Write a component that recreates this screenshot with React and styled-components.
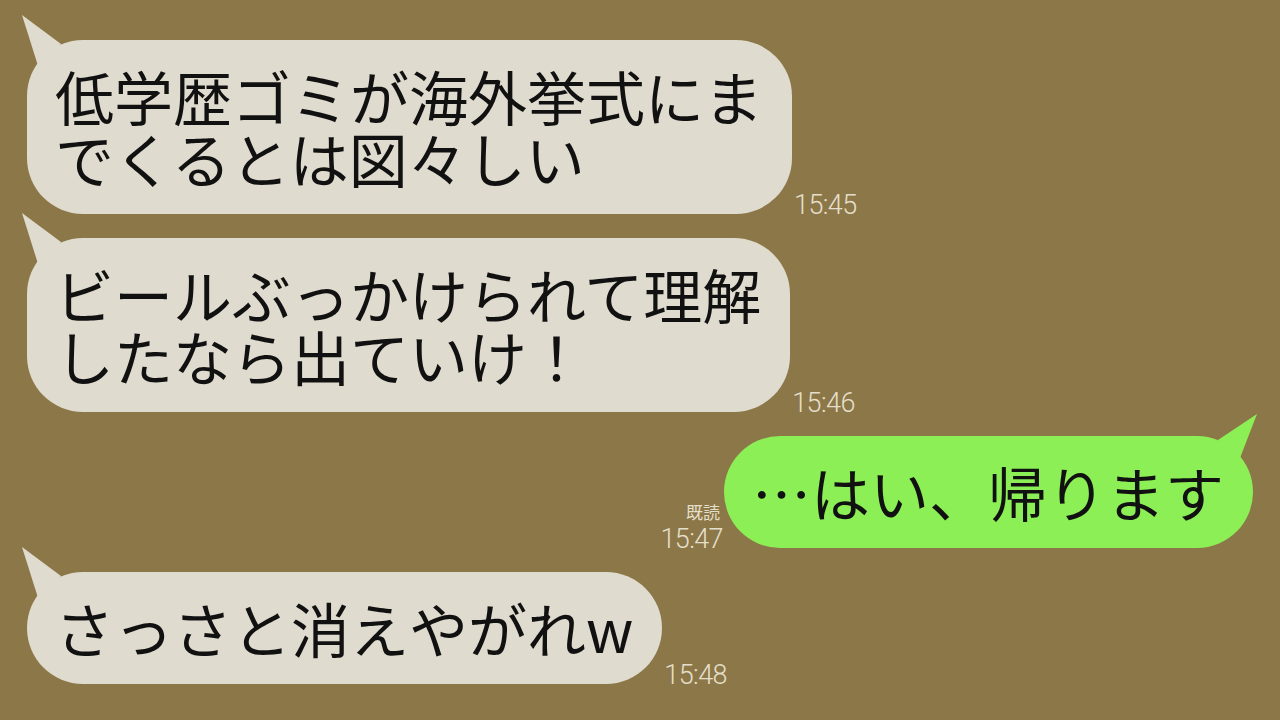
import React from 'react';
import styled, { createGlobalStyle } from 'styled-components';

const messages = [
  { id: 1, side: 'left', text: '低学歴ゴミが海外挙式にま\nでくるとは図々しい', time: '15:45' },
  { id: 2, side: 'left', text: 'ビールぶっかけられて理解\nしたなら出ていけ！', time: '15:46' },
  { id: 3, side: 'right', text: '…はい、帰ります', time: '15:47', read: true },
  { id: 4, side: 'left', text: 'さっさと消えやがれw', time: '15:48' },
];

const Tail = ({ side }) =>
  side === 'left' ? (
    <TailSvg $side={side} width="44" height="56" viewBox="0 0 44 56">
      <polygon points="1,0 40,29 18,54" />
    </TailSvg>
  ) : (
    <TailSvg $side={side} width="44" height="56" viewBox="0 0 44 56">
      <polygon points="41,0 2,26 24,44" />
    </TailSvg>
  );

const App = () => {
  return (
    <>
      <GlobalStyle />
      <Chat>
        {messages.map((m) => (
          <Row key={m.id} $side={m.side}>
            {m.side === 'right' && (
              <Meta $side={m.side}>
                {m.read && <Read>既読</Read>}
                <Time>{m.time}</Time>
              </Meta>
            )}
            <Bubble $side={m.side}>
              <Tail side={m.side} />
              <BubbleText>{m.text}</BubbleText>
            </Bubble>
            {m.side === 'left' && (
              <Meta $side={m.side}>
                <Time>{m.time}</Time>
              </Meta>
            )}
          </Row>
        ))}
      </Chat>
    </>
  );
};

export default App;

const GlobalStyle = createGlobalStyle`
  html, body {
    margin: 0;
    padding: 0;
    height: 100%;
    background: #8c7748;
  }
  body {
    font-family: "Noto Sans CJK JP", "Noto Sans", sans-serif;
  }
`;

const Chat = styled.div`
  display: flex;
  flex-direction: column;
  gap: 24px;
  width: 1280px;
  height: 720px;
  box-sizing: border-box;
  padding: 40px 27px 0 27px;
  background: #8c7748;
  overflow: hidden;
`;

const Row = styled.div`
  display: flex;
  align-items: flex-end;
  justify-content: ${(p) => (p.$side === 'right' ? 'flex-end' : 'flex-start')};
`;

const Bubble = styled.div`
  position: relative;
  padding: 25px 29px 25px 28px;
  border-radius: 56px;
  background: ${(p) => (p.$side === 'right' ? '#8cef56' : '#dfdbce')};
  color: ${(p) => (p.$side === 'right' ? '#8cef56' : '#dfdbce')};
`;

const TailSvg = styled.svg`
  position: absolute;
  ${(p) => (p.$side === 'right' ? 'right: -7px;' : 'left: -6px;')}
  top: ${(p) => (p.$side === 'right' ? '-22px' : '-25px')};
  fill: currentColor;
`;

const BubbleText = styled.div`
  position: relative;
  font-family: "Noto Sans CJK JP", sans-serif;
  font-size: 59px;
  line-height: 62px;
  color: #111;
  white-space: pre;
`;

const Meta = styled.div`
  display: flex;
  flex-direction: column;
  align-items: ${(p) => (p.$side === 'right' ? 'flex-end' : 'flex-start')};
  margin: ${(p) => (p.$side === 'right' ? '0 1px -5px 0' : '0 0 -5px 2px')};
  color: #e4dfca;
`;

const Read = styled.span`
  font-family: "Noto Sans CJK JP", sans-serif;
  font-size: 17px;
  line-height: 20px;
  margin: 0 3px 3px 0;
`;

const Time = styled.span`
  font-family: Roboto, "Liberation Sans", sans-serif;
  font-weight: 300;
  font-size: 27px;
  line-height: 28px;
  letter-spacing: -0.6px;
`;
